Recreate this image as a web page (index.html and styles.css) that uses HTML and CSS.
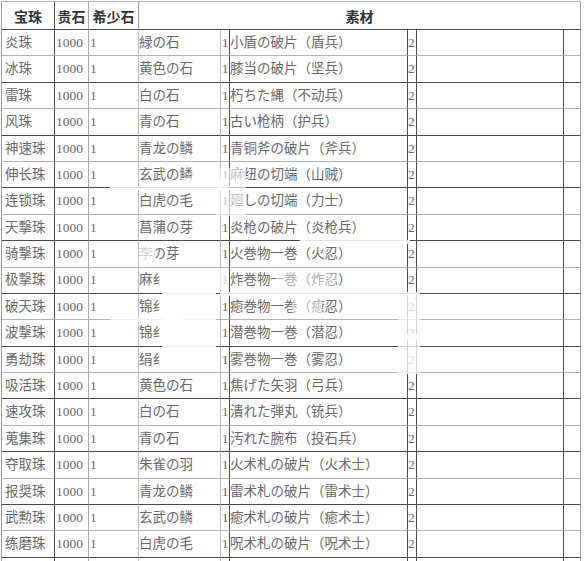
FILE: index.html
```html
<!DOCTYPE html>
<html lang="zh">
<head>
<meta charset="utf-8">
<title>宝珠素材</title>
<link rel="stylesheet" href="styles.css">
</head>
<body>
<div class="page">
  <div class="sheet">
    <div class="row head">
      <div class="c c1">宝珠</div><div class="c c2">贵石</div><div class="c c3">希少石</div><div class="c mat">素材</div>
    </div>
    <div class="row light"><div class="c c1">炎珠</div><div class="c c2">1000</div><div class="c c3">1</div><div class="c c4">緑の石</div><div class="c c5">1</div><div class="c c6">小盾の破片（盾兵）</div><div class="c c7">2</div><div class="c c8"></div><div class="c c9"></div></div>
    <div class="row dark"><div class="c c1">冰珠</div><div class="c c2">1000</div><div class="c c3">1</div><div class="c c4">黄色の石</div><div class="c c5">1</div><div class="c c6">膝当の破片（坚兵）</div><div class="c c7">2</div><div class="c c8"></div><div class="c c9"></div></div>
    <div class="row light"><div class="c c1">雷珠</div><div class="c c2">1000</div><div class="c c3">1</div><div class="c c4">白の石</div><div class="c c5">1</div><div class="c c6">朽ちた縄（不动兵）</div><div class="c c7">2</div><div class="c c8"></div><div class="c c9"></div></div>
    <div class="row dark"><div class="c c1">风珠</div><div class="c c2">1000</div><div class="c c3">1</div><div class="c c4">青の石</div><div class="c c5">1</div><div class="c c6">古い枪柄（护兵）</div><div class="c c7">2</div><div class="c c8"></div><div class="c c9"></div></div>
    <div class="row light"><div class="c c1">神速珠</div><div class="c c2">1000</div><div class="c c3">1</div><div class="c c4">青龙の鳞</div><div class="c c5">1</div><div class="c c6">青铜斧の破片（斧兵）</div><div class="c c7">2</div><div class="c c8"></div><div class="c c9"></div></div>
    <div class="row dark"><div class="c c1">伸长珠</div><div class="c c2">1000</div><div class="c c3">1</div><div class="c c4">玄武の鳞</div><div class="c c5">1</div><div class="c c6">麻纽の切端（山贼）</div><div class="c c7">2</div><div class="c c8"></div><div class="c c9"></div></div>
    <div class="row light"><div class="c c1">连锁珠</div><div class="c c2">1000</div><div class="c c3">1</div><div class="c c4">白虎の毛</div><div class="c c5">1</div><div class="c c6">廻しの切端（力士）</div><div class="c c7">2</div><div class="c c8"></div><div class="c c9"></div></div>
    <div class="row dark"><div class="c c1">天撃珠</div><div class="c c2">1000</div><div class="c c3">1</div><div class="c c4">菖蒲の芽</div><div class="c c5">1</div><div class="c c6">炎枪の破片（炎枪兵）</div><div class="c c7">2</div><div class="c c8"></div><div class="c c9"></div></div>
    <div class="row light"><div class="c c1">骑撃珠</div><div class="c c2">1000</div><div class="c c3">1</div><div class="c c4">李の芽</div><div class="c c5">1</div><div class="c c6">火巻物一巻（火忍）</div><div class="c c7">2</div><div class="c c8"></div><div class="c c9"></div></div>
    <div class="row dark"><div class="c c1">极撃珠</div><div class="c c2">1000</div><div class="c c3">1</div><div class="c c4">麻纟</div><div class="c c5">1</div><div class="c c6">炸巻物一巻（炸忍）</div><div class="c c7">2</div><div class="c c8"></div><div class="c c9"></div></div>
    <div class="row light"><div class="c c1">破天珠</div><div class="c c2">1000</div><div class="c c3">1</div><div class="c c4">锦纟</div><div class="c c5">1</div><div class="c c6">癒巻物一巻（癒忍）</div><div class="c c7">2</div><div class="c c8"></div><div class="c c9"></div></div>
    <div class="row dark"><div class="c c1">波撃珠</div><div class="c c2">1000</div><div class="c c3">1</div><div class="c c4">锦纟</div><div class="c c5">1</div><div class="c c6">潜巻物一巻（潜忍）</div><div class="c c7">2</div><div class="c c8"></div><div class="c c9"></div></div>
    <div class="row light"><div class="c c1">勇劫珠</div><div class="c c2">1000</div><div class="c c3">1</div><div class="c c4">绢纟</div><div class="c c5">1</div><div class="c c6">雾巻物一巻（雾忍）</div><div class="c c7">2</div><div class="c c8"></div><div class="c c9"></div></div>
    <div class="row dark"><div class="c c1">吸活珠</div><div class="c c2">1000</div><div class="c c3">1</div><div class="c c4">黄色の石</div><div class="c c5">1</div><div class="c c6">焦げた矢羽（弓兵）</div><div class="c c7">2</div><div class="c c8"></div><div class="c c9"></div></div>
    <div class="row light"><div class="c c1">速攻珠</div><div class="c c2">1000</div><div class="c c3">1</div><div class="c c4">白の石</div><div class="c c5">1</div><div class="c c6">潰れた弾丸（铳兵）</div><div class="c c7">2</div><div class="c c8"></div><div class="c c9"></div></div>
    <div class="row dark"><div class="c c1">蒐集珠</div><div class="c c2">1000</div><div class="c c3">1</div><div class="c c4">青の石</div><div class="c c5">1</div><div class="c c6">汚れた腕布（投石兵）</div><div class="c c7">2</div><div class="c c8"></div><div class="c c9"></div></div>
    <div class="row light"><div class="c c1">夺取珠</div><div class="c c2">1000</div><div class="c c3">1</div><div class="c c4">朱雀の羽</div><div class="c c5">1</div><div class="c c6">火术札の破片（火术士）</div><div class="c c7">2</div><div class="c c8"></div><div class="c c9"></div></div>
    <div class="row dark"><div class="c c1">报奨珠</div><div class="c c2">1000</div><div class="c c3">1</div><div class="c c4">青龙の鳞</div><div class="c c5">1</div><div class="c c6">雷术札の破片（雷术士）</div><div class="c c7">2</div><div class="c c8"></div><div class="c c9"></div></div>
    <div class="row light"><div class="c c1">武勲珠</div><div class="c c2">1000</div><div class="c c3">1</div><div class="c c4">玄武の鳞</div><div class="c c5">1</div><div class="c c6">癒术札の破片（癒术士）</div><div class="c c7">2</div><div class="c c8"></div><div class="c c9"></div></div>
    <div class="row dark"><div class="c c1">练磨珠</div><div class="c c2">1000</div><div class="c c3">1</div><div class="c c4">白虎の毛</div><div class="c c5">1</div><div class="c c6">呪术札の破片（呪术士）</div><div class="c c7">2</div><div class="c c8"></div><div class="c c9"></div></div>
    <div class="row light"><div class="c c1"></div><div class="c c2"></div><div class="c c3"></div><div class="c c4"></div><div class="c c5"></div><div class="c c6"></div><div class="c c7"></div><div class="c c8"></div><div class="c c9"></div></div>
  </div>
  <svg class="watermark" width="584" height="561" viewBox="0 0 584 561" aria-hidden="true">
    <g fill="#ffffff">
      <rect x="182" y="178" width="46" height="9" opacity="0.75"/>
      <rect x="216" y="168" width="30" height="48" opacity="0.6"/>
      <rect x="110" y="186" width="120" height="4" opacity="0.8"/>
      <rect x="140" y="246" width="16" height="18" opacity="0.7"/>
      <rect x="300" y="240" width="110" height="4" opacity="0.85"/>
      <rect x="162" y="268" width="54" height="104" opacity="0.92"/>
      <rect x="216" y="268" width="12" height="22" opacity="0.7"/>
      <rect x="276" y="272" width="60" height="16" opacity="0.45"/>
      <rect x="220" y="292" width="200" height="4" opacity="0.85"/>
      <rect x="292" y="300" width="30" height="14" opacity="0.5"/>
      <rect x="398" y="296" width="22" height="78" opacity="0.75"/>
      <rect x="110" y="318" width="70" height="4" opacity="0.8"/>
      <rect x="380" y="334" width="40" height="6" opacity="0.8"/>
    </g>
  </svg>
</div>
</body>
</html>
```

FILE: styles.css
```css
html, body {
  margin: 0;
  padding: 0;
  background: #ffffff;
}

.page {
  position: relative;
  width: 584px;
  height: 561px;
  overflow: hidden;
  padding: 1px 0 0 1px;
  box-sizing: border-box;
}

.sheet {
  display: grid;
  grid-template-columns: 53px 34px 50px 82px 9px 178px 9px 147px 17px;
  grid-template-rows: 28px repeat(21, 26.4px);
  width: 579px;
  border-top: 1px solid #b5b5b5;
  border-left: 1px solid #9a9a9a;
  font-family: "Liberation Serif", "Noto Sans CJK SC", serif;
  font-size: 13.5px;
  color: #6a6a6a;
}

.row {
  display: contents;
}

.c {
  display: flex;
  align-items: center;
  box-sizing: border-box;
  border-right: 1px solid #4f4f4f;
  border-bottom: 1px solid #b4b4b4;
  white-space: nowrap;
  overflow: hidden;
  line-height: 1;
}

.row.dark > .c,
.row.head > .c {
  border-bottom-color: #4a4a4a;
}

.c1 { padding-left: 3px; }
.c2 { padding-left: 1px; border-right-color: #a8a8a8; }
.c3 { padding-left: 1px; border-right-color: #bdbdbd; }
.c4 { padding-left: 0; border-right-color: #bdbdbd; }
.c5 { justify-content: center; }
.c6 { padding-left: 0; }
.c7 { padding-left: 0; }
.c9 { border-right-color: #9a9a9a; }

.head > .c {
  justify-content: center;
  padding: 0;
  font-family: "Noto Sans CJK SC", sans-serif;
  font-weight: 700;
  font-size: 14px;
  color: #333333;
}

.head > .c3 {
  border-right-color: #a0a0a0;
}

.head > .mat {
  grid-column: 4 / span 6;
  border-right-color: #9a9a9a;
}

.watermark {
  position: absolute;
  left: 0;
  top: 0;
  pointer-events: none;
}
```
